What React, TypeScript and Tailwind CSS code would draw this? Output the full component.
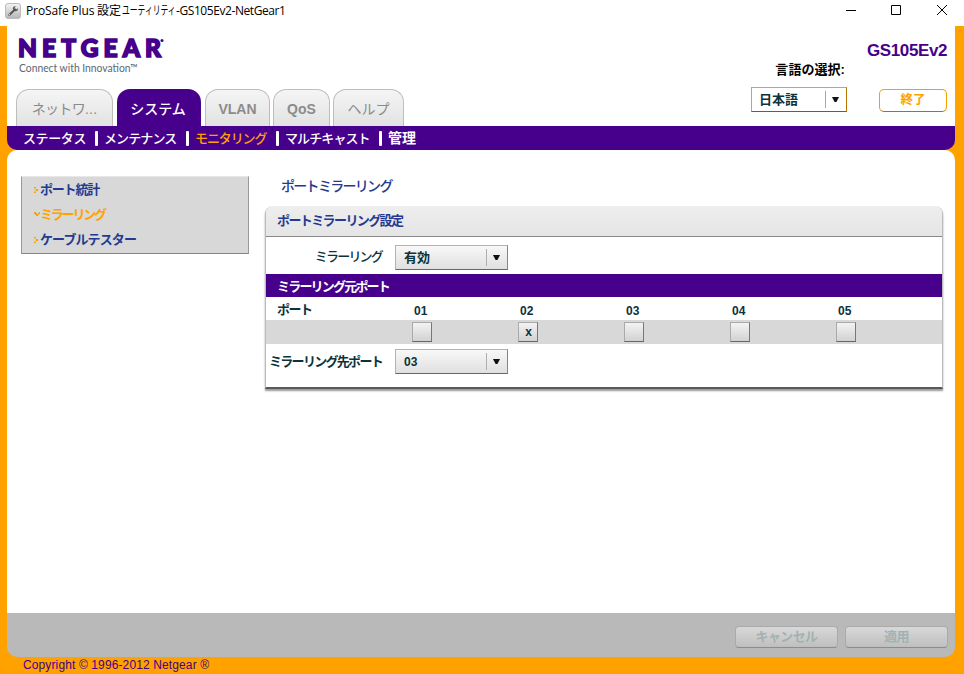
import React from "react";

const jp = "font-['Liberation_Sans','Noto_Sans_CJK_JP',sans-serif]";

function Tab({ className, children }: { className: string; children: React.ReactNode }) {
  return (
    <div
      className={`flex h-[37px] items-center justify-center whitespace-nowrap rounded-t-[13px] border border-b-0 border-[#bdbdbd] bg-gradient-to-b from-[#f5f5f5] to-[#e2e2e2] pt-0.5 text-[14px] text-[#8b8b8b] ${className}`}
    >
      {children}
    </div>
  );
}

function Separator() {
  return <span className="h-[15px] w-[3px] shrink-0 rounded-[1px] bg-white" />;
}

function Triangle() {
  return (
    <svg width="7" height="5" viewBox="0 0 7 5" className="mr-px block">
      <path d="M0 0H7L4.4 5H2.6Z" fill="#111" />
    </svg>
  );
}

function Select({ children }: { children: React.ReactNode }) {
  return (
    <div className="flex h-[25px] w-[113px] items-center border border-[#b3b3b3] border-b-[#666] border-r-[#858585] bg-gradient-to-b from-[#f8f8f8] to-[#e0e0e0] pl-2 font-bold text-[#0b333c]">
      <span className="flex-1">{children}</span>
      <span className="flex h-[17px] w-[21px] items-center justify-center border-l border-[#b0b0b0]">
        <Triangle />
      </span>
    </div>
  );
}

function Marker({ open }: { open?: boolean }) {
  return (
    <svg width="6" height="6" viewBox="0 0 6 6" className="shrink-0" fill="#ffa200">
      {open ? (
        <path d="M0 0H2V1H3V2H4V1H5V0H6V2H5V3H4V4H2V3H1V2H0Z" />
      ) : (
        <path d="M0 0H2V1.6H0ZM1.6 2H4V4H1.6ZM0 4.4H2V6H0Z" />
      )}
    </svg>
  );
}

function FooterButton({ children }: { children: React.ReactNode }) {
  return (
    <div className="flex h-[22px] w-[103px] items-center justify-center rounded-[4px] border border-[#aaa] border-b-[#8c8c8c] bg-gradient-to-b from-[#d8d8d8] to-[#bfbfbf] pb-px font-bold tracking-[-0.6px] text-[#a2b1b1]">
      {children}
    </div>
  );
}

const ports = [
  { name: "01", on: false },
  { name: "02", on: true },
  { name: "03", on: false },
  { name: "04", on: false },
  { name: "05", on: false },
];

export default function App() {
  return (
    <div className={`flex h-[674px] w-[964px] flex-col overflow-hidden bg-[#ffa200] text-[13px] leading-none ${jp}`}>
      <div className="flex h-[26px] shrink-0 items-start justify-between bg-white">
        <div className="flex items-center pl-[5px] pt-[2px]">
          <svg width="16" height="16" viewBox="0 0 16 16">
            <defs>
              <linearGradient id="tile" x2="0" y2="1">
                <stop stopColor="#f4f4f4" />
                <stop offset="1" stopColor="#b5b5b5" />
              </linearGradient>
            </defs>
            <rect x=".5" y=".5" width="15" height="15" rx="2.5" fill="url(#tile)" stroke="#bcbcbc" />
            <path d="M4.2 11.9L10 6.4" stroke="#555" strokeWidth="2.1" strokeLinecap="round" />
            <path d="M12.8 5.2L10.8 6.7L9.3 5.2L10.8 3.2C8.5 2.7 7.2 4.8 8.1 6.6L9.5 8C11.5 8.7 13.3 7.4 12.8 5.2Z" fill="#555" />
            <circle cx="4.4" cy="11.7" r=".6" fill="#eee" />
          </svg>
          <span className="ml-[5px] flex whitespace-nowrap font-['Open_Sans','Noto_Sans_CJK_JP',sans-serif] text-[12px] leading-[18px] text-black">
            <span className="w-[70px] tracking-[-0.12px]">ProSafe Plus</span>
            <span className="w-[24px] pl-px">設定</span>
            <span className="ml-0.5 w-[54px]">
              <span className="inline-block origin-left scale-x-[0.65]">ユーティリティ</span>
            </span>
            <span className="tracking-[-0.42px]">-GS105Ev2-NetGear1</span>
          </span>
        </div>
        <svg width="103" height="12" viewBox="0 0 103 12" className="mr-[15px] mt-[4px]" fill="none" stroke="#000">
          <path d="M0 6.5H10M45.5 1.5H54.5V10.5H45.5ZM91 1L101 11M101 1L91 11" />
        </svg>
      </div>

      <div className="ml-[7px] mr-[9px] flex h-[100px] shrink-0 justify-between bg-white">
        <div className="flex flex-col justify-between pl-[9px] pt-[3px]">
          <svg width="160" height="46" viewBox="0 0 160 46" className="ml-[2px]">
            <text x="0" y="28" textLength="143" lengthAdjust="spacing" fontFamily="Lato" fontWeight="900" fontSize="24.5" fill="#46008c" stroke="#46008c" strokeWidth="1.7">NETGEAR</text>
            <circle cx="144" cy="11.5" r="1.5" fill="#46008c" />
            <text x="1" y="42.5" textLength="119" lengthAdjust="spacingAndGlyphs" fontFamily="Lato" fontSize="11" fill="#596873">Connect with Innovation™</text>
          </svg>
          <div className="flex items-end">
            <Tab className="w-[97px] tracking-[-0.7px]">ネットワ<span className="tracking-[0.2px]">...</span></Tab>
            <div className="ml-1 flex h-[37px] w-[84px] items-center justify-center rounded-t-[13px] bg-[#46008c] pr-0.5 pt-[3px] text-[14px] font-medium text-white">システム</div>
            <Tab className="ml-1 w-[65px] font-bold">VLAN</Tab>
            <Tab className="ml-[3px] w-[57px] font-bold">QoS</Tab>
            <Tab className="ml-[3px] w-[71px]">ヘルプ</Tab>
          </div>
        </div>
        <div className="flex flex-col items-end pr-2 pt-4">
          <div className="text-[17px] font-bold tracking-[-0.4px] text-[#46008c]">GS105Ev2</div>
          <div className="mr-[102px] mt-[4px] whitespace-nowrap font-bold tracking-[0.05px] text-black">言語の選択:</div>
          <div className="mt-[11px] flex items-end gap-8">
            <div className="flex h-[25px] w-[96px] items-center border border-[#f5a000] border-b-[#8a5800] border-r-[#b87500] bg-white pl-[7px]">
              <span className="flex-1 font-bold text-[#0b333c]">日本語</span>
              <span className="flex h-[17px] w-[21px] items-center justify-center border-l border-[#f5a000]"><Triangle /></span>
            </div>
            <div className="flex h-[23px] w-[68px] items-center justify-center rounded-[5px] border border-[#f5a000] border-b-[#a87018] bg-white pb-px text-[12.5px] font-bold text-[#ffa200]">終了</div>
          </div>
        </div>
      </div>

      <div className="ml-[7px] mr-[9px] flex h-6 shrink-0 items-center whitespace-nowrap rounded-b-[10px] bg-[#46008c] pl-4 font-medium text-white">
        <span className="w-[72px] tracking-[-0.4px]">ステータス</span>
        <Separator />
        <span className="ml-[6px] w-[82px] tracking-[-0.9px]">メンテナンス</span>
        <Separator />
        <span className="ml-[6px] w-[81px] tracking-[-1.1px] text-[#ffa200]">モニタリング</span>
        <Separator />
        <span className="ml-[6px] w-[94px] tracking-[-0.9px]">マルチキャスト</span>
        <Separator />
        <span className="ml-[6px] text-[14px] font-bold">管理</span>
      </div>

      <div className="ml-[7px] mr-[9px] flex h-[463px] shrink-0 items-start rounded-t-[10px] bg-white">
        <div className="ml-[14px] mt-[26px] flex h-[78px] w-[228px] flex-col border border-[#999] border-b-[#858585] border-t-[#e8e8e8] bg-[#d8d8d8] pl-3 font-bold text-[#243a91]">
          <div className="flex h-[25px] items-center tracking-[-1.2px]"><Marker />ポート統計</div>
          <div className="flex h-[25px] items-center tracking-[-2.2px] text-[#ffa200]"><Marker open />ミラーリング</div>
          <div className="flex h-[25px] items-center tracking-[-0.9px]"><Marker />ケーブルテスター</div>
        </div>

        <div className="ml-4 w-[678px] pt-[28px]">
          <h1 className="h-7 pl-4 pt-px text-[14px] font-medium tracking-[-1.7px] text-[#243a91]">ポートミラーリング</h1>
          <div className="rounded-t-[8px] border-x border-[#bbb] border-b-[2px] border-b-[#5a5a5a] bg-white shadow-[0_2px_2px_#999]">
            <div className="flex h-[31px] items-center rounded-t-[7px] border-b border-[#888] bg-gradient-to-b from-[#eee] to-[#e5e5e5] pb-0.5 pl-[11px] font-bold tracking-[-1.6px] text-[#243a91]">
              ポートミラーリング設定
            </div>
            <div className="flex h-[37px] items-center pt-1 text-[#0b333c]">
              <span className="w-[116px] pb-0.5 text-right font-medium tracking-[-1.8px]">ミラーリング</span>
              <span className="ml-[13px]"><Select>有効</Select></span>
            </div>
            <div className="flex h-[23px] items-center bg-[#46008c] pl-[11px] pt-px font-bold tracking-[-1.8px] text-white">ミラーリング元ポート</div>
            <div className="flex h-[23px] items-center pl-[11px] pt-1 font-bold text-[#0b333c]">
              <span className="w-[137px] shrink-0 pb-0.5 tracking-[-1.5px]">ポート</span>
              {ports.map((p) => <span key={p.name} className="w-[106px] shrink-0 text-[12px]">{p.name}</span>)}
            </div>
            <div className="flex h-6 items-center bg-[#d8d8d8] pl-[146px]">
              {ports.map((p) => (
                <span key={p.name} className="w-[106px] shrink-0">
                  <span className="flex size-5 items-center justify-center border border-[#aaa] border-b-[#666] border-r-[#777] bg-gradient-to-b from-[#f3f3f3] to-[#d2d2d2] pl-px text-[12px] font-bold text-[#0b333c]">{p.on ? "x" : ""}</span>
                </span>
              ))}
            </div>
            <div className="flex h-[43px] items-start pt-[5px] text-[#0b333c]">
              <span className="flex h-[25px] w-[116px] items-center justify-end whitespace-nowrap pb-px font-bold tracking-[-1.7px]">ミラーリング先ポート</span>
              <span className="ml-[13px] text-[12px]"><Select>03</Select></span>
            </div>
          </div>
        </div>
      </div>

      <div className="ml-[7px] mr-[9px] flex h-[44px] shrink-0 items-center justify-end gap-[7px] rounded-b-[10px] bg-[#b9b9b9] pr-[7px] pt-1">
        <FooterButton>キャンセル</FooterButton>
        <FooterButton>適用</FooterButton>
      </div>
      <div className="pl-[23px] pt-[2px] text-[12px] tracking-[0.12px] text-[#46008c]">Copyright © 1996-2012 Netgear ®</div>
    </div>
  );
}
